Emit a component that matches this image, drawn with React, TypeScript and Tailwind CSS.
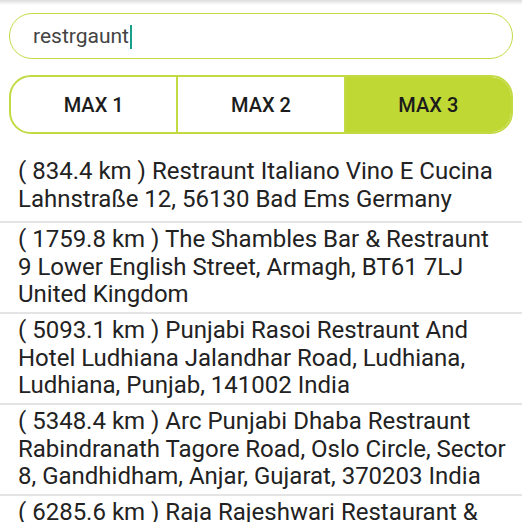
const results = [
  {
    dist: "834.4",
    lines: ["Restraunt Italiano Vino E Cucina", "Lahnstraße 12, 56130 Bad Ems Germany"],
  },
  {
    dist: "1759.8",
    lines: ["The Shambles Bar & Restraunt", "9 Lower English Street, Armagh, BT61 7LJ", "United Kingdom"],
  },
  {
    dist: "5093.1",
    lines: ["Punjabi Rasoi Restraunt And", "Hotel Ludhiana Jalandhar Road, Ludhiana,", "Ludhiana, Punjab, 141002 India"],
  },
  {
    dist: "5348.4",
    lines: ["Arc Punjabi Dhaba Restraunt", "Rabindranath Tagore Road, Oslo Circle, Sector", "8, Gandhidham, Anjar, Gujarat, 370203 India"],
  },
  {
    dist: "6285.6",
    lines: ["Raja Rajeshwari Restaurant &", "Bar"],
  },
];

const tabs = ["MAX 1", "MAX 2", "MAX 3"];

export default function App() {
  const active = 2;

  return (
    <div className="h-[522px] w-[522px] overflow-hidden bg-white font-['Roboto',sans-serif]">
      {/* toolbar shadow */}
      <div className="h-[5px] bg-gradient-to-b from-[#dcdcdc] to-white" />

      {/* Search */}
      <div className="mx-[9px] mt-[8px] flex h-[46px] items-center rounded-full border-[1.5px] border-[#c3da45] pl-[23px]">
        <span className="text-[21px] leading-none text-[#444]">restrgaunt</span>
        <span className="ml-[1px] mt-[2px] h-[24px] w-[2px] bg-[#16a08c]" />
      </div>

      {/* Segmented */}
      <div className="mx-[9px] mt-[16px] flex h-[59px] overflow-hidden rounded-[22px] border-2 border-[#c3da45]">
        {tabs.map((t, i) => (
          <div
            key={t}
            className={`flex flex-1 items-center justify-center text-[20px] font-medium text-[#1c1c1c] ${
              i > 0 ? "border-l-2 border-[#c3da45]" : ""
            } ${i === active ? "bg-[#bfd833]" : ""}`}
          >
            {t}
          </div>
        ))}
      </div>

      {/* Results */}
      <div className="mt-[21px]">
        {results.map((r, idx) => (
          <div
            key={r.dist}
            className={`border-b-2 border-[#e4e4e4] px-[18px] pt-[3px] ${idx === 0 ? "pb-[8px]" : "pb-[3.5px]"}`}
          >
            {r.lines.map((line, i) => (
              <div key={i} className="whitespace-nowrap text-[24px] leading-[27.5px] text-[#222]">
                {i === 0 ? `( ${r.dist} km ) ${line}` : line}
              </div>
            ))}
          </div>
        ))}
      </div>
    </div>
  );
}
